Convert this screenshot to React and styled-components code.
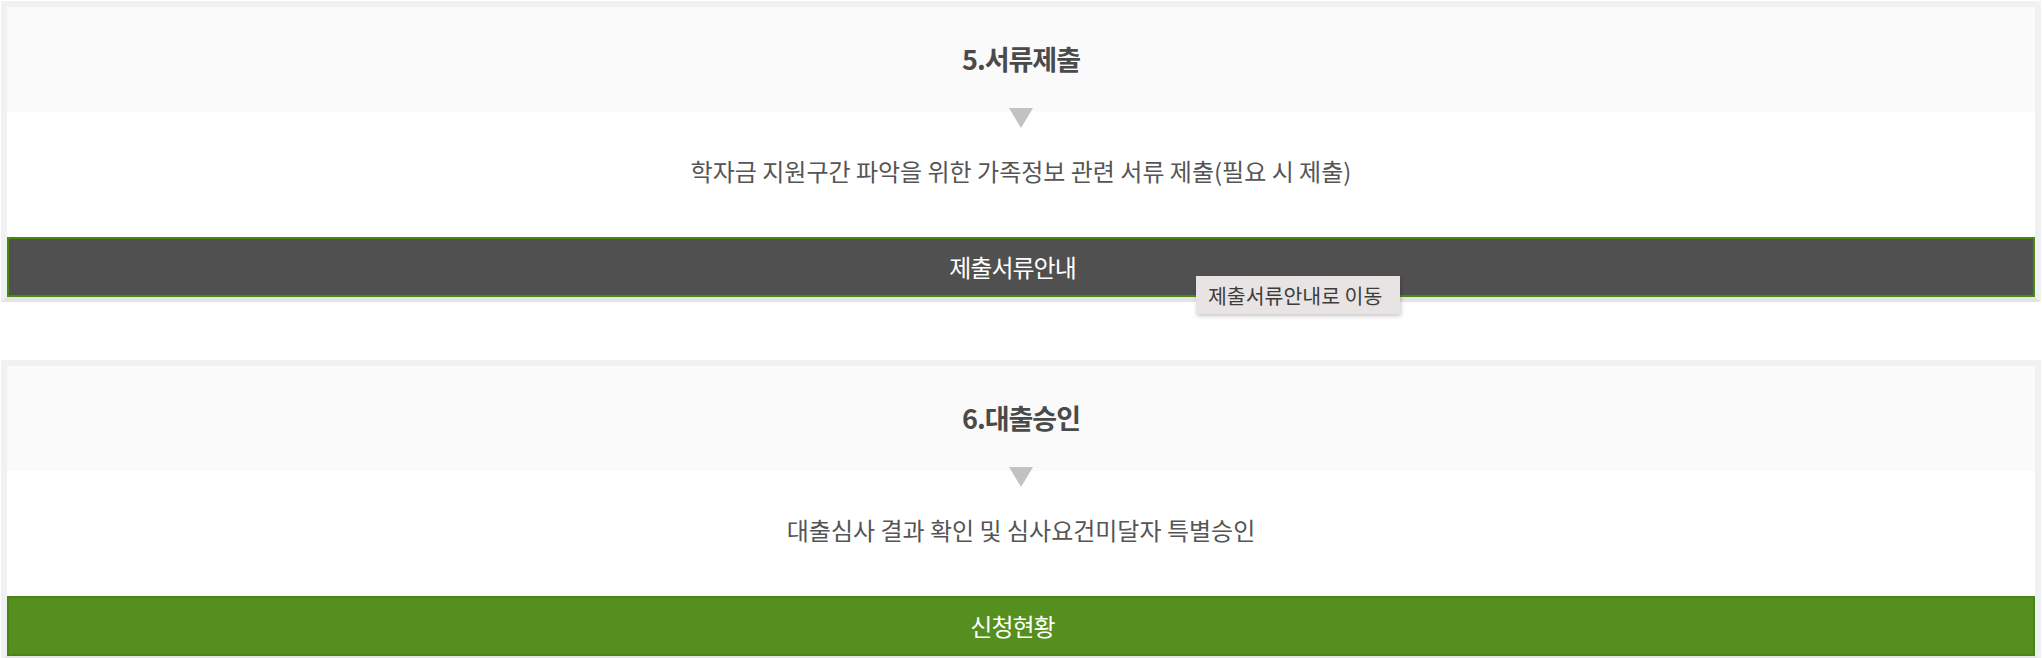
import React from "react";
import styled, { createGlobalStyle } from "styled-components";

const Global = createGlobalStyle`
  html, body {
    margin: 0;
    padding: 0;
    background: #fff;
  }
  body {
    font-family: "Noto Sans CJK KR", "Noto Sans", sans-serif;
  }
`;

const steps = [
  {
    no: 5,
    title: "서류제출",
    desc: "학자금 지원구간 파악을 위한 가족정보 관련 서류 제출(필요 시 제출)",
    button: "제출서류안내",
    variant: "dark",
    tooltip: "제출서류안내로 이동",
  },
  {
    no: 6,
    title: "대출승인",
    desc: "대출심사 결과 확인 및 심사요건미달자 특별승인",
    button: "신청현황",
    variant: "green",
  },
];

const StepCard = ({ step }) => (
  <Card>
    <Head>
      <Title>
        {step.no}.{step.title}
      </Title>
    </Head>
    <Body>
      <Arrow />
      <Desc>{step.desc}</Desc>
    </Body>
    <ActionButton variant={step.variant}>
      {step.button}
      {step.tooltip && <Tooltip>{step.tooltip}</Tooltip>}
    </ActionButton>
  </Card>
);

export default function App() {
  return (
    <>
      <Global />
      <Page>
        {steps.map((s) => (
          <StepCard key={s.no} step={s} />
        ))}
      </Page>
    </>
  );
}

const Page = styled.div`
  display: flex;
  flex-direction: column;
  gap: 58px;
  padding: 1px 1px 0;
`;

const Card = styled.section`
  display: flex;
  flex-direction: column;
  border: 6px solid #f0f1f3;
  border-bottom: 5px solid #e4e4e4;
  background: #fff;
`;

const Head = styled.div`
  height: 103px;
  padding-bottom: 2px;
  background: #fafafa;
  display: flex;
  align-items: center;
  justify-content: center;
`;

const Title = styled.h3`
  margin: 0;
  font-size: 27px;
  font-weight: 700;
  letter-spacing: -1px;
  color: #4a4a4a;
  line-height: 30px;
`;

const Body = styled.div`
  display: flex;
  flex-direction: column;
  align-items: center;
  padding-bottom: 51px;
`;

const Arrow = styled.span`
  width: 0;
  height: 0;
  margin-top: -4px;
  border-left: 12px solid transparent;
  border-right: 12px solid transparent;
  border-top: 20px solid #c2c2c2;
`;

const Desc = styled.p`
  margin: 28px 0 0;
  font-size: 24px;
  line-height: 30px;
  color: #555;
  letter-spacing: 0;
`;

const ActionButton = styled.a`
  position: relative;
  display: block;
  height: 56px;
  line-height: 55px;
  padding-right: 17px;
  text-align: center;
  font-size: 24px;
  letter-spacing: -1px;
  color: #fff;
  cursor: pointer;
  background: ${(p) => (p.variant === "green" ? "#558f1e" : "#505050")};
  border: 2px solid ${(p) => (p.variant === "green" ? "#4a8316" : "#4b8a12")};
`;

const Tooltip = styled.span`
  position: absolute;
  left: 1187px;
  top: 37px;
  z-index: 2;
  width: 204px;
  height: 38px;
  box-sizing: border-box;
  padding-left: 12px;
  display: flex;
  align-items: center;
  background: #e8e4e3;
  color: #3d3d3d;
  font-size: 20.5px;
  letter-spacing: 0;
  line-height: 1;
  box-shadow: 1px 2px 4px rgba(0, 0, 0, 0.22);
`;
